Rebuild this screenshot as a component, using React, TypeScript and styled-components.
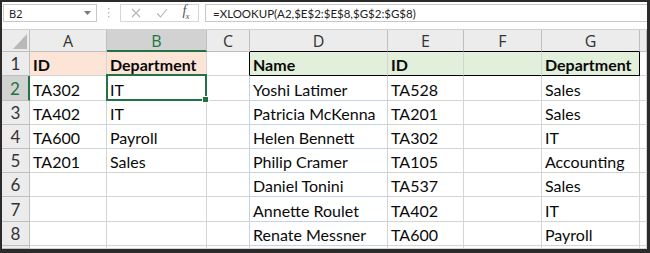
import styled, { createGlobalStyle } from 'styled-components';

const GlobalStyle = createGlobalStyle`
  html, body {
    margin: 0;
    padding: 0;
    background: #fff;
  }
`;

const GRID = '#d4d4d4';
const HEAD_LINE = '#bfbfbf';
const GREEN = '#217346';
const BLUE_LINE = '#c3d3ea';
const PEACH = '#fce4d6';
const MINT = '#e2efda';

const COLS = ['A', 'B', 'C', 'D', 'E', 'F', 'G'];
const ROW_HEIGHTS = [24, 25, 24, 24, 24, 24, 25, 24];

const left: string[][] = [
  ['TA302', 'IT'],
  ['TA402', 'IT'],
  ['TA600', 'Payroll'],
  ['TA201', 'Sales'],
];

const right: string[][] = [
  ['Yoshi Latimer', 'TA528', 'Sales'],
  ['Patricia McKenna', 'TA201', 'Sales'],
  ['Helen Bennett', 'TA302', 'IT'],
  ['Philip Cramer', 'TA105', 'Accounting'],
  ['Daniel Tonini', 'TA537', 'Sales'],
  ['Annette Roulet', 'TA402', 'IT'],
  ['Renate Messner', 'TA600', 'Payroll'],
];

const Frame = styled.div`
  width: 650px;
  height: 253px;
  box-sizing: border-box;
  border-style: solid;
  border-color: #2b2b2b;
  border-width: 2px 3px 4px 2px;
  overflow: hidden;
  background: #fff;
  display: flex;
  flex-direction: column;
`;

const FormulaBar = styled.div`
  height: 28px;
  flex: none;
  box-sizing: border-box;
  display: flex;
  align-items: flex-start;
  padding: 2px 0 0 1px;
  background: #fff;
`;

const NameBox = styled.div`
  width: 94px;
  height: 18px;
  box-sizing: border-box;
  border: 1px solid #c8c8c8;
  display: flex;
  align-items: center;
  justify-content: space-between;
  padding: 0 5px 0 5px;
  font-family: 'Noto Sans', 'Open Sans', sans-serif;
  font-size: 11px;
  color: #222;
`;

const Grip = styled.div`
  width: 23px;
  height: 18px;
  display: flex;
  align-items: center;
  justify-content: center;
`;

const ButtonBox = styled.div`
  width: 79px;
  height: 18px;
  box-sizing: border-box;
  border: 1px solid #d6d6d6;
  display: flex;
  align-items: center;
  justify-content: space-around;
  padding: 0 2px;
`;

const FxLabel = styled.span`
  font-family: 'Liberation Serif', serif;
  font-style: italic;
  font-size: 14px;
  line-height: 14px;
  color: #555;
  letter-spacing: -1px;

  sub {
    font-size: 9px;
  }
`;

const FormulaInput = styled.div`
  flex: 1;
  height: 18px;
  margin-left: 6px;
  box-sizing: border-box;
  border: 1px solid #c8c8c8;
  border-right: none;
  display: flex;
  align-items: center;
  padding-left: 7px;
  font-family: 'Lato', 'Noto Sans', sans-serif;
  font-size: 11.5px;
  color: #222;
  white-space: nowrap;
`;

const Sheet = styled.div`
  flex: 1;
  display: grid;
  grid-template-columns: 28px 77px 100px 43px 138px 76px 78px 98px 1fr;
  grid-template-rows: 22px ${ROW_HEIGHTS.map((h) => `${h}px`).join(' ')} 1fr;
  border-top: 1px solid #d0d0d0;
  margin-top: -1px;
`;

const Corner = styled.div`
  background: #ececec;
  border-right: 1px solid ${HEAD_LINE};
  border-bottom: 1px solid ${HEAD_LINE};
  box-sizing: border-box;
  display: flex;
  align-items: flex-end;
  justify-content: flex-end;
  padding: 0 2px 2px 0;
`;

const ColHeader = styled.div<{ $selected?: boolean; $bottom?: string }>`
  box-sizing: border-box;
  background: ${({ $selected }) => ($selected ? '#d2d2d2' : '#ececec')};
  color: ${({ $selected }) => ($selected ? GREEN : '#333')};
  border-right: 1px solid ${HEAD_LINE};
  border-bottom: ${({ $selected, $bottom }) =>
    $selected ? `2px solid ${GREEN}` : `1px solid ${$bottom || HEAD_LINE}`};
  display: flex;
  align-items: center;
  justify-content: center;
  font-family: 'Open Sans', 'Noto Sans', sans-serif;
  font-size: 16px;
  padding-top: ${({ $selected }) => ($selected ? '1px' : '0')};
`;

const RowHeader = styled.div<{ $selected?: boolean }>`
  box-sizing: border-box;
  background: ${({ $selected }) => ($selected ? '#d2d2d2' : '#ececec')};
  color: ${({ $selected }) => ($selected ? GREEN : '#333')};
  border-right: ${({ $selected }) => ($selected ? `2px solid ${GREEN}` : `1px solid ${HEAD_LINE}`)};
  border-bottom: 1px solid ${HEAD_LINE};
  display: flex;
  align-items: center;
  justify-content: center;
  font-family: 'Lato', 'Open Sans', sans-serif;
  font-size: 17px;
`;

const Cell = styled.div<{ $fill?: string; $bold?: boolean; $rb?: string; $bb?: string }>`
  position: relative;
  box-sizing: border-box;
  background: ${({ $fill }) => $fill || '#fff'};
  border-right: 1px solid ${({ $rb }) => $rb || GRID};
  border-bottom: 1px solid ${({ $bb }) => $bb || GRID};
  display: flex;
  align-items: flex-end;
  padding: 0 0 2px 3px;
  font-family: 'Lato', 'Open Sans', sans-serif;
  font-size: 16px;
  line-height: 16px;
  font-weight: ${({ $bold }) => ($bold ? 700 : 400)};
  color: #0a0a0a;
  white-space: nowrap;
  overflow: visible;
`;

const Selection = styled.div`
  position: absolute;
  top: -2px;
  left: -1px;
  right: -1px;
  bottom: -1px;
  border: 2px solid ${GREEN};
  pointer-events: none;
  z-index: 2;
`;

const FillHandle = styled.div`
  position: absolute;
  right: -4px;
  bottom: -4px;
  width: 5px;
  height: 5px;
  background: ${GREEN};
  border: 1px solid #fff;
`;

type CellSpec = {
  text?: string;
  fill?: string;
  bold?: boolean;
  rb?: string;
  bb?: string;
  selected?: boolean;
};

function buildRows(): CellSpec[][] {
  const rows: CellSpec[][] = [];
  // row 1: headers of both tables
  rows.push([
    { text: 'ID', fill: PEACH, bold: true },
    { text: 'Department', fill: PEACH, bold: true },
    { rb: '#000' },
    { text: 'Name', fill: MINT, bold: true, bb: '#000' },
    { text: 'ID', fill: MINT, bold: true, bb: '#000' },
    { fill: MINT, bb: '#000' },
    { text: 'Department', fill: MINT, bold: true, bb: '#000', rb: '#000' },
    {},
  ]);
  for (let i = 0; i < 7; i++) {
    const l = left[i] || [];
    const r = right[i];
    rows.push([
      { text: l[0] },
      { text: l[1], selected: i === 0 },
      { rb: BLUE_LINE },
      { text: r[0], bb: BLUE_LINE },
      { text: r[1] },
      {},
      { text: r[2] },
      {},
    ]);
  }
  rows.push([{}, {}, {}, {}, {}, {}, {}, {}]);
  return rows;
}

function Caret() {
  return (
    <svg width="7" height="4" viewBox="0 0 7 4">
      <path d="M0 0 L7 0 L3.5 4 Z" fill="#777" />
    </svg>
  );
}

function GripDots() {
  return (
    <svg width="3" height="10" viewBox="0 0 3 10">
      <rect x="1" y="0" width="1.4" height="1.4" fill="#b8b8b8" />
      <rect x="1" y="4" width="1.4" height="1.4" fill="#b8b8b8" />
      <rect x="1" y="8" width="1.4" height="1.4" fill="#b8b8b8" />
    </svg>
  );
}

function CancelIcon() {
  return (
    <svg width="10" height="10" viewBox="0 0 10 10">
      <path d="M1 1 L9 9 M9 1 L1 9" stroke="#b4b4b4" strokeWidth="1.1" fill="none" />
    </svg>
  );
}

function EnterIcon() {
  return (
    <svg width="12" height="10" viewBox="0 0 12 10">
      <path d="M1 5.5 L4.5 9 L11 1" stroke="#b4b4b4" strokeWidth="1.1" fill="none" />
    </svg>
  );
}

function CornerTriangle() {
  return (
    <svg width="14" height="15" viewBox="0 0 14 15">
      <path d="M14 0 L14 15 L0 15 Z" fill="#b9b9b9" />
    </svg>
  );
}

export default function App() {
  const rows = buildRows();
  return (
    <>
      <GlobalStyle />
      <Frame>
        <FormulaBar>
          <NameBox>
            <span>B2</span>
            <Caret />
          </NameBox>
          <Grip>
            <GripDots />
          </Grip>
          <ButtonBox>
            <CancelIcon />
            <EnterIcon />
            <FxLabel>
              f<sub>x</sub>
            </FxLabel>
          </ButtonBox>
          <FormulaInput>=XLOOKUP(A2,$E$2:$E$8,$G$2:$G$8)</FormulaInput>
        </FormulaBar>
        <Sheet>
          <Corner>
            <CornerTriangle />
          </Corner>
          {COLS.map((c, i) => (
            <ColHeader key={c} $selected={c === 'B'} $bottom={i >= 3 ? '#000' : undefined}>
              {c}
            </ColHeader>
          ))}
          <ColHeader />
          {rows.map((row, ri) => (
            <RowFragment key={ri} index={ri} cells={row} />
          ))}
        </Sheet>
      </Frame>
    </>
  );
}

function RowFragment({ index, cells }: { index: number; cells: CellSpec[] }) {
  return (
    <>
      <RowHeader $selected={index === 1}>{index < 8 ? index + 1 : ''}</RowHeader>
      {cells.map((c, ci) => (
        <Cell key={ci} $fill={c.fill} $bold={c.bold} $rb={c.rb} $bb={c.bb}>
          {c.text}
          {c.selected && (
            <Selection>
              <FillHandle />
            </Selection>
          )}
        </Cell>
      ))}
    </>
  );
}
